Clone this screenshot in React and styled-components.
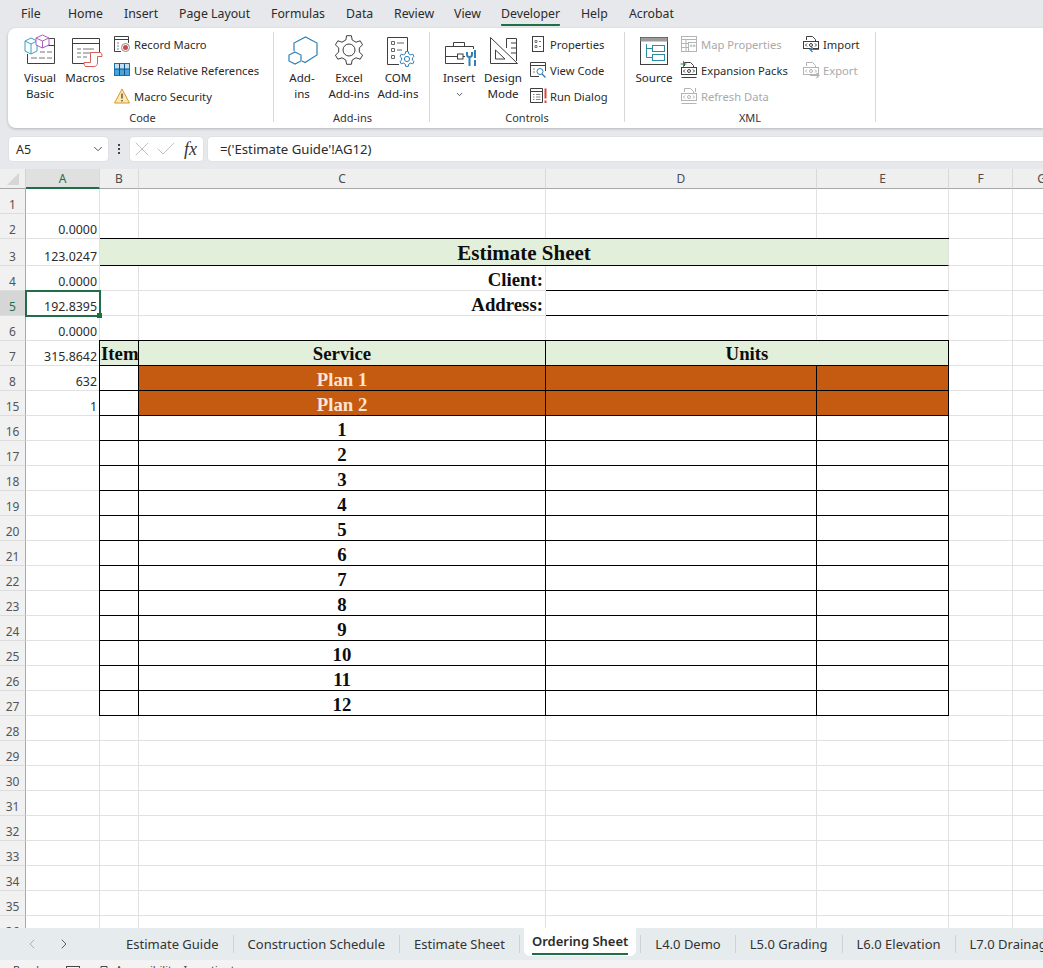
import React from 'react';
import styled, { createGlobalStyle, css } from 'styled-components';
import { Check, ChevronDown, ChevronLeft, ChevronRight, X } from 'lucide-react';

const UI_FONT = '"Noto Sans", "Open Sans", sans-serif';
const GRID_LINE = '#e1e1e1';
const GREEN = '#1f6e46';
const BLUE = '#2f80b5';
const GREY_ICON = '#b4b4b4';
const DARK_ICON = '#3f3f3f';

const GlobalStyle = createGlobalStyle`
  html, body { margin: 0; padding: 0; background: #e6e8ec; }
  body { font-family: ${UI_FONT}; color: #262626; }
`;

const Page = styled.div`
  width: 1043px;
  height: 968px;
  display: flex;
  flex-direction: column;
  overflow: hidden;
  background: #e6e8ec;
`;

/* menu */
const MenuBar = styled.nav`
  height: 28px;
  flex: none;
  display: flex;
  padding-left: 21px;
`;
const MenuItem = styled.div`
  width: ${(p) => p.$w}px;
  flex: none;
  font-size: 12.3px;
  line-height: 28px;
  color: #2b2b2b;
`;
const MenuActive = styled.span`
  display: inline-block;
  height: 24px;
  line-height: 28px;
  border-bottom: 2px solid ${GREEN};
  border-radius: 0 0 1px 1px;
`;

/* ribbon */
const Ribbon = styled.section`
  height: 100px;
  flex: none;
  box-sizing: border-box;
  margin-left: 8px;
  padding-top: 4px;
  display: flex;
  background: #fff;
  border-radius: 8px 0 0 8px;
  box-shadow: 0 1px 3px rgba(0, 0, 0, 0.22);
`;
const Group = styled.div`
  width: ${(p) => p.$w}px;
  flex: none;
  box-sizing: border-box;
  padding-left: ${(p) => p.$pad}px;
  display: flex;
  flex-direction: column;
`;
const GroupBody = styled.div`
  height: 78px;
  display: flex;
`;
const GroupName = styled.div`
  margin-top: 2px;
  font-size: 11px;
  line-height: 12px;
  text-align: center;
  color: #333;
  margin-left: ${(p) => -p.$pad}px;
`;
const RibbonSep = styled.div`
  width: 1px;
  height: 90px;
  flex: none;
  background: #d8d8d8;
`;
const BigButton = styled.div`
  width: ${(p) => p.$w}px;
  flex: none;
  padding-top: 2px;
  display: flex;
  flex-direction: column;
  align-items: center;
  font-size: 11.6px;
  line-height: 16px;
  text-align: center;
  white-space: nowrap;
`;
const BigIcon = styled.svg`
  width: 32px;
  height: 32px;
  margin-bottom: 4px;
  overflow: visible;
  fill: none;
  flex: none;
`;
const InsertChevron = styled(ChevronDown)`
  margin-top: 4px;
`;
const SmallColumn = styled.div`
  width: ${(p) => (p.$w ? `${p.$w}px` : 'auto')};
  flex: none;
  margin-top: -1px;
  margin-left: ${(p) => p.$gap || 0}px;
  display: flex;
  flex-direction: column;
`;
const SmallButton = styled.div`
  height: 26px;
  display: flex;
  align-items: center;
  gap: 4px;
  font-size: 11.2px;
  white-space: nowrap;
  color: ${(p) => (p.$off ? '#a9a9a9' : '#2b2b2b')};
`;
const SmallIcon = styled.svg`
  width: 16px;
  height: 16px;
  flex: none;
  overflow: visible;
  fill: none;
`;

/* formula bar */
const FormulaBar = styled.div`
  height: 24px;
  flex: none;
  padding: 9px 0 8px 9px;
  display: flex;
  align-items: stretch;
`;
const InputBox = styled.div`
  flex: ${(p) => (p.$grow ? '1' : 'none')};
  width: ${(p) => (p.$w ? `${p.$w}px` : 'auto')};
  margin-left: ${(p) => p.$gap || 0}px;
  box-sizing: border-box;
  display: flex;
  align-items: center;
  background: #fff;
  border-radius: ${(p) => (p.$grow ? '4px 0 0 4px' : '4px')};
  box-shadow: 0 0 0 1px #dfe1e5;
  font-size: 13.2px;
  color: #2b2b2b;
`;
const NameBox = styled(InputBox)`
  justify-content: space-between;
  padding: 0 3px 0 7px;
  font-size: 12.5px;
`;
const Dots = styled.div`
  width: 22px;
  flex: none;
  display: flex;
  flex-direction: column;
  align-items: center;
  justify-content: center;
  gap: 2px;
  & > i {
    width: 2px;
    height: 2px;
    background: #444;
  }
`;
const FxBox = styled(InputBox)`
  color: #c0c0c0;
`;
const FxText = styled.span`
  font-family: "Liberation Serif", serif;
  font-style: italic;
  font-size: 18px;
  color: #333;
  margin-left: 6px;
`;
const FormulaText = styled.span`
  padding-left: 12px;
`;

/* sheet */
const Sheet = styled.div`
  flex: 1;
  min-height: 0;
  overflow: hidden;
  display: grid;
  grid-template-columns: 26px 74px 39px 407px 271px 132px 64px 58px;
  grid-template-rows: 20px 25px 25px 27px repeat(40, 25px);
  background: #fff;
`;
const Corner = styled.div`
  background: #efefef;
  border-bottom: 1px solid #a8a8a8;
  border-right: 1px solid #d4d4d4;
  display: flex;
  align-items: center;
  justify-content: center;
`;
const ColHead = styled.div`
  display: flex;
  align-items: center;
  justify-content: center;
  font-size: 12px;
  color: ${(p) => (p.$active ? GREEN : '#4d4d4d')};
  background: ${(p) => (p.$active ? '#e0e0e0' : '#efefef')};
  border-right: 1px solid #d9d9d9;
  border-bottom: ${(p) => (p.$active ? `2px solid ${GREEN}` : '1px solid #a8a8a8')};
`;
const RowHead = styled.div`
  display: flex;
  align-items: flex-end;
  justify-content: center;
  font-size: 12px;
  line-height: 16px;
  color: ${(p) => (p.$active ? GREEN : '#555')};
  background: ${(p) => (p.$active ? '#d6d6d6' : '#f1f1f1')};
  border-right: 1px solid #a8a8a8;
  border-bottom: 1px solid #dcdcdc;
`;

const frames = {
  box: css`
    position: relative;
    z-index: 1;
    border-right-color: #000;
    border-bottom-color: #000;
    box-shadow: -1px 0 0 #000, 0 -1px 0 #000, -1px -1px 0 #000;
  `,
  rule: css`
    position: relative;
    z-index: 1;
    border-bottom-color: #000;
    box-shadow: 0 -1px 0 #000;
  `,
  under: css`
    border-bottom-color: #000;
  `,
};

const Cell = styled.div`
  grid-column: span ${(p) => p.$span || 1};
  min-width: 0;
  display: flex;
  align-items: flex-end;
  justify-content: ${(p) => p.$align || 'center'};
  background: ${(p) => p.$bg || '#fff'};
  border-right: 1px solid ${GRID_LINE};
  border-bottom: 1px solid ${GRID_LINE};
  ${(p) => p.$frame && frames[p.$frame]}
`;
const ValueCell = styled(Cell)`
  justify-content: flex-end;
  padding-right: 2px;
  font-size: 12.4px;
  line-height: 16px;
  color: #2b2b2b;
  ${(p) =>
    p.$selected &&
    css`
      position: relative;
      z-index: 2;
      outline: 2px solid ${GREEN};
      outline-offset: -1px;
      &::after {
        content: '';
        position: absolute;
        right: -3px;
        bottom: -3px;
        width: 5px;
        height: 5px;
        background: ${GREEN};
      }
    `}
`;
const SerifCell = styled(Cell)`
  font-family: "Liberation Serif", "Times New Roman", serif;
  font-weight: 700;
  font-size: ${(p) => p.$size || 18.8}px;
  line-height: ${(p) => (p.$size ? 24 : 21)}px;
  color: ${(p) => p.$color || '#0d0d0d'};
  white-space: nowrap;
`;
const FieldLabel = styled(SerifCell)`
  padding-right: 2px;
`;
const HeadCell = styled(SerifCell)`
  line-height: 23px;
  padding-left: ${(p) => p.$inset || 0}px;
`;

/* sheet tabs */
const TabBar = styled.div`
  height: 32px;
  flex: none;
  display: flex;
  background: #e6ebee;
  white-space: nowrap;
  overflow: hidden;
`;
const TabNav = styled.div`
  width: 112px;
  flex: none;
  box-sizing: border-box;
  padding-left: 24px;
  display: flex;
  align-items: center;
  gap: 16px;
`;
const Tab = styled.div`
  flex: none;
  padding: 0 14px;
  font-size: 13px;
  line-height: 32px;
  color: #333;
`;
const TabSep = styled.div`
  width: 1px;
  height: 18px;
  flex: none;
  margin-top: 7px;
  background: #cfd3d6;
`;
const ActiveTab = styled.div`
  flex: none;
  height: 28px;
  box-sizing: border-box;
  margin: 0 4px;
  padding: 0 8px;
  background: #fff;
  border-radius: 0 0 6px 6px;
  font-size: 13px;
  font-weight: 600;
  line-height: 26px;
  color: #2b2b2b;
  & > span {
    display: block;
    height: 25px;
    border-bottom: 2px solid ${GREEN};
  }
`;

/* status bar, only the top of it is in the frame */
const StatusBar = styled.footer`
  height: 8px;
  flex: none;
  box-sizing: border-box;
  overflow: hidden;
  display: flex;
  align-items: flex-start;
  padding: 2px 0 0 13px;
  background: #f3f3f3;
  font-size: 11px;
  line-height: 16px;
  color: #444;
`;
const StatusIcon = styled.svg`
  width: 16px;
  height: 16px;
  flex: none;
  fill: none;
  margin: 3px 4px 0 ${(p) => p.$gap}px;
`;

/* gear outline used by the add-in icons */
function gearPath(cx, cy, ro, ri, teeth) {
  const step = (Math.PI * 2) / teeth;
  let d = '';
  for (let i = 0; i < teeth; i++) {
    const a = i * step - Math.PI / 2;
    const pts = [
      [ri, a - step * 0.3],
      [ro, a - step * 0.16],
      [ro, a + step * 0.16],
      [ri, a + step * 0.3],
    ];
    pts.forEach(([r, t], j) => {
      const x = (cx + r * Math.cos(t)).toFixed(1);
      const y = (cy + r * Math.sin(t)).toFixed(1);
      d += `${i === 0 && j === 0 ? 'M' : 'L'}${x} ${y}`;
    });
  }
  return `${d}Z`;
}

const VisualBasicIcon = () => (
  <BigIcon viewBox="0 0 32 32">
    <path d="M24 4.5H30.5V29.5H3.5V20M14 11.5H30.5" stroke={DARK_ICON} />
    <path d="M16 18h5M23 18h5M7 24h6M15 24h6M23 24h5" stroke="#777" />
    <path d="M7 4L13 7V17L7 20L1 17V7ZM1 7L7 10L13 7M7 10V20" stroke="#3b9fc6" fill="#fff" />
    <path d="M18.5 1L25 4V11L18.5 14L12 11V4ZM12 4L18.5 7L25 4M18.5 7V14" stroke="#a760bf" fill="#fff" />
  </BigIcon>
);
const MacrosIcon = () => (
  <BigIcon viewBox="0 0 32 32">
    <path d="M3.5 4.5H30.5V19M3.5 4.5V29.5H16M3.5 9.5H30.5" stroke={DARK_ICON} />
    <path d="M8 15h4M14 15h11M8 19h4M14 19h8M8 23h4M14 23h4" stroke="#777" />
    <path d="M21.5 18.5H31C32.5 18.5 33 20 33 22.5H28.5V29C28.5 31 27 32.5 25 32.5H17C15.5 32.5 15 31 15 28.5H21.5Z" stroke="#d9605a" fill="#fff" />
  </BigIcon>
);
const RecordIcon = () => (
  <SmallIcon viewBox="0 0 16 16">
    <path d="M.5 .5H14.5V7M.5 .5V15.5H7M.5 3.5H14.5" stroke={DARK_ICON} />
    <path d="M3 7h2M3 10h2M3 13h2" stroke="#888" />
    <circle cx="11.5" cy="11.5" r="4" stroke="#8a8a8a" fill="#fff" />
    <circle cx="11.5" cy="11.5" r="2.5" fill="#d9453d" />
  </SmallIcon>
);
const RelativeIcon = () => (
  <SmallIcon viewBox="0 0 16 16">
    <rect x=".5" y="1.5" width="15" height="12" fill="#bfe0f5" stroke="#1d6fa8" />
    <rect x="1" y="7" width="14" height="6" fill="#48a4de" />
    <path d="M.5 7H15.5M5.5 1.5V13.5M10.5 1.5V13.5" stroke="#17507c" />
  </SmallIcon>
);
const WarningIcon = () => (
  <SmallIcon viewBox="0 0 16 16">
    <path d="M8 1L15.5 15H.5Z" fill="#fde7ae" stroke="#d8982c" strokeLinejoin="round" />
    <path d="M8 5.5V10.5M8 12V13.5" stroke="#444" strokeWidth="1.3" />
  </SmallIcon>
);
const AddInsIcon = () => (
  <BigIcon viewBox="0 0 32 32">
    <path d="M8 17V9L19.5 3L31 9V21L19 28.5L16 27" stroke={BLUE} strokeWidth="1.2" />
    <path d="M9 18L15 21V27L9 30L3 27V21Z" stroke={BLUE} strokeWidth="1.2" />
  </BigIcon>
);
const ExcelAddInsIcon = () => (
  <BigIcon viewBox="0 0 32 32">
    <path d={gearPath(16, 16, 14.5, 10.5, 6)} stroke={DARK_ICON} strokeLinejoin="round" />
    <circle cx="16" cy="16" r="6" stroke={DARK_ICON} />
  </BigIcon>
);
const ComAddInsIcon = () => (
  <BigIcon viewBox="0 0 32 32">
    <path d="M5.5 3.5H25.5V17M5.5 3.5V30.5H17" stroke={DARK_ICON} />
    <path d="M9.5 7.5h3v3h-3zM9.5 14.5h3v3h-3zM9.5 21.5h3v3h-3z" stroke="#666" />
    <path d="M15 9h7M15 16h5" stroke="#666" />
    <path d={gearPath(25, 25, 7.5, 5.5, 6)} stroke={BLUE} fill="#fff" strokeLinejoin="round" />
    <circle cx="25" cy="25" r="2.6" stroke={BLUE} />
  </BigIcon>
);
const InsertIcon = () => (
  <BigIcon viewBox="0 0 32 32">
    <path d="M10.5 12V8.5H21.5V12" stroke={DARK_ICON} />
    <path d="M2.5 12.5H30.5V15M2.5 12.5V29.5H21M2.5 22.5H14M20 22.5H22" stroke={DARK_ICON} />
    <rect x="14.5" y="20" width="5.5" height="5" stroke={DARK_ICON} fill="#fff" />
    <path d="M24 18V20.5A2.5 2.5 0 0 0 29 20.5V18M26.5 23V32" stroke={BLUE} strokeWidth="2" />
    <path d="M32 16V24M32 26V32" stroke={BLUE} strokeWidth="2" />
  </BigIcon>
);
const DesignModeIcon = () => (
  <BigIcon viewBox="0 0 32 32">
    <path d="M3.5 3.5V29.5H30.5ZM8.5 16V25H18Z" stroke={DARK_ICON} />
    <path d="M19.5 14V4.5H29.5V27M24 9h5M24 14h5M24 19h5" stroke={DARK_ICON} />
  </BigIcon>
);
const PropertiesIcon = () => (
  <SmallIcon viewBox="0 0 16 16">
    <rect x="2.5" y=".5" width="11" height="15" stroke={DARK_ICON} />
    <path d="M5 4.5h2v2H5zM5 9.5h2v2H5zM9 5.5h2M9 10.5h2" stroke="#777" />
  </SmallIcon>
);
const ViewCodeIcon = () => (
  <SmallIcon viewBox="0 0 16 16">
    <path d="M.5 .5H15.5V9M.5 .5V14.5H9M.5 3.5H15.5" stroke={DARK_ICON} />
    <path d="M3 7h2M3 10h2" stroke="#888" />
    <circle cx="10" cy="9.5" r="3" stroke={BLUE} fill="#fff" />
    <path d="M12 12L15.5 15.5" stroke={BLUE} strokeWidth="1.4" />
  </SmallIcon>
);
const RunDialogIcon = () => (
  <SmallIcon viewBox="0 0 16 16">
    <path d="M.5 .5H12.5V14.5H.5ZM.5 3.5H12.5" stroke={DARK_ICON} />
    <path d="M3 6.5h1.5M6 6.5h4.5M3 9h1.5M6 9h4.5M3 11.5h1.5M6 11.5h4.5" stroke="#888" />
    <path d="M15.5 .5V10.5M15.5 12.5V15" stroke="#d9453d" strokeWidth="2" />
  </SmallIcon>
);
const SourceIcon = () => (
  <BigIcon viewBox="0 0 32 32">
    <rect x="2.5" y="3.5" width="27" height="27" stroke={DARK_ICON} fill="#fff" />
    <rect x="2.5" y="3.5" width="27" height="4" fill="#9c9c9c" />
    <rect x="14.5" y="11.5" width="12" height="6" stroke="#2d8ba6" />
    <rect x="14.5" y="20.5" width="12" height="6" stroke="#2d8ba6" />
    <path d="M8.5 10V23.5H14.5M8.5 14.5H14.5" stroke="#2d8ba6" />
  </BigIcon>
);
const MapPropertiesIcon = () => (
  <SmallIcon viewBox="0 0 16 16">
    <rect x=".5" y=".5" width="15" height="15" stroke={GREY_ICON} />
    <path d="M.5 3.5H15.5M.5 7.5H8M.5 11.5H8M5 3.5V15.5" stroke={GREY_ICON} />
    <rect x="7.5" y="6.5" width="8" height="9" stroke={GREY_ICON} fill="#fff" />
    <path d="M9.5 9h1.5v1.5H9.5zM12.5 9H14v1.5h-1.5z" stroke={GREY_ICON} strokeWidth=".8" />
  </SmallIcon>
);

/* folded page with a tag plate, shared by the xml icons */
const XmlPlate = ({ color }) => (
  <>
    <path d="M3.5 4V.5H9.5L12.5 3.5V5" stroke={color} />
    <rect x=".5" y="5.5" width="15" height="7" stroke={color} fill="#fff" />
    <path d="M4 7.5L2.5 9L4 10.5M12 7.5L13.5 9L12 10.5" stroke={color} />
    <circle cx="8" cy="9" r="1.5" stroke={color} />
  </>
);
const ExpansionIcon = () => (
  <SmallIcon viewBox="0 0 16 16">
    <XmlPlate color={DARK_ICON} />
    <path d="M.5 15.5H15.5" stroke={DARK_ICON} />
    <path d="M2.5 -1V5M-.5 2H5.5" stroke="#3b9150" />
  </SmallIcon>
);
const RefreshIcon = () => (
  <SmallIcon viewBox="0 0 16 16">
    <XmlPlate color={GREY_ICON} />
    <path d="M.5 15.5H15.5M14.5 0V4" stroke={GREY_ICON} />
  </SmallIcon>
);
const ImportIcon = () => (
  <SmallIcon viewBox="0 0 16 16">
    <XmlPlate color={DARK_ICON} />
    <path d="M16 13.5H7M9.5 11L7 13.5L9.5 16" stroke={BLUE} strokeWidth="1.2" fill="#fff" />
  </SmallIcon>
);
const ExportIcon = () => (
  <SmallIcon viewBox="0 0 16 16">
    <XmlPlate color={GREY_ICON} />
    <path d="M7 13.5H16M13.5 11L16 13.5L13.5 16" stroke={GREY_ICON} strokeWidth="1.2" />
  </SmallIcon>
);

const TABS_BEFORE = ['Estimate Guide', 'Construction Schedule', 'Estimate Sheet'];
const TABS_AFTER = ['L4.0 Demo', 'L5.0 Grading', 'L6.0 Elevation', 'L7.0 Drainage'];
const COLUMNS = ['A', 'B', 'C', 'D', 'E', 'F', 'G'];
const MENU = [
  ['File', 47], ['Home', 56], ['Insert', 55], ['Page Layout', 92], ['Formulas', 75],
  ['Data', 48], ['Review', 60], ['View', 47], ['Developer', 80], ['Help', 48], ['Acrobat', 60],
];
const ORANGE = '#c55a11';
const PALE_GREEN = '#e2efda';
const PEACH = '#fbe5d6';

const rows = [
  { label: '1', kind: 'plain' },
  { label: '2', value: '0.0000', kind: 'plain' },
  { label: '3', value: '123.0247', kind: 'title' },
  { label: '4', value: '0.0000', kind: 'field', text: 'Client:' },
  { label: '5', value: '192.8395', kind: 'field', text: 'Address:', selected: true },
  { label: '6', value: '0.0000', kind: 'plain' },
  { label: '7', value: '315.8642', kind: 'header' },
  { label: '8', value: '632', kind: 'plan', text: 'Plan 1' },
  { label: '15', value: '1', kind: 'plan', text: 'Plan 2' },
  ...Array.from({ length: 12 }, (_, i) => ({ label: String(16 + i), kind: 'item', text: String(i + 1) })),
  ...Array.from({ length: 9 }, (_, i) => ({ label: String(28 + i), kind: 'plain' })),
];

function RowCells({ row }) {
  switch (row.kind) {
    case 'title':
      return (
        <>
          <SerifCell $span={4} $frame="rule" $bg={PALE_GREEN} $size={21}>Estimate Sheet</SerifCell>
          <Cell />
          <Cell />
        </>
      );
    case 'field':
      return (
        <>
          <Cell />
          <FieldLabel $align="flex-end">{row.text}</FieldLabel>
          <Cell $frame="under" />
          <Cell $frame="under" />
          <Cell />
          <Cell />
        </>
      );
    case 'header':
      return (
        <>
          <HeadCell $frame="box" $bg={PALE_GREEN} $align="flex-start" $inset={1}>Item</HeadCell>
          <HeadCell $frame="box" $bg={PALE_GREEN}>Service</HeadCell>
          <HeadCell $frame="box" $bg={PALE_GREEN} $span={2}>Units</HeadCell>
          <Cell />
          <Cell />
        </>
      );
    case 'plan':
      return (
        <>
          <Cell $frame="box" />
          <SerifCell $frame="box" $bg={ORANGE} $color={PEACH}>{row.text}</SerifCell>
          <Cell $frame="box" $bg={ORANGE} />
          <Cell $frame="box" $bg={ORANGE} />
          <Cell />
          <Cell />
        </>
      );
    case 'item':
      return (
        <>
          <Cell $frame="box" />
          <SerifCell $frame="box">{row.text}</SerifCell>
          <Cell $frame="box" />
          <Cell $frame="box" />
          <Cell />
          <Cell />
        </>
      );
    default:
      return (
        <>
          <Cell />
          <Cell />
          <Cell />
          <Cell />
          <Cell />
          <Cell />
        </>
      );
  }
}

export default function App() {
  return (
    <Page>
      <GlobalStyle />
      <MenuBar>
        {MENU.map(([name, w]) => (
          <MenuItem key={name} $w={w}>
            {name === 'Developer' ? <MenuActive>{name}</MenuActive> : name}
          </MenuItem>
        ))}
      </MenuBar>

      <Ribbon>
        <Group $w={265} $pad={7}>
          <GroupBody>
            <BigButton $w={50}><VisualBasicIcon />Visual<br />Basic</BigButton>
            <BigButton $w={40}><MacrosIcon />Macros</BigButton>
            <SmallColumn $gap={9}>
              <SmallButton><RecordIcon />Record Macro</SmallButton>
              <SmallButton><RelativeIcon />Use Relative References</SmallButton>
              <SmallButton><WarningIcon />Macro Security</SmallButton>
            </SmallColumn>
          </GroupBody>
          <GroupName $pad={3}>Code</GroupName>
        </Group>
        <RibbonSep />
        <Group $w={155} $pad={5}>
          <GroupBody>
            <BigButton $w={46}><AddInsIcon />Add-<br />ins</BigButton>
            <BigButton $w={48}><ExcelAddInsIcon />Excel<br />Add-ins</BigButton>
            <BigButton $w={50}><ComAddInsIcon />COM<br />Add-ins</BigButton>
          </GroupBody>
          <GroupName $pad={3}>Add-ins</GroupName>
        </Group>
        <RibbonSep />
        <Group $w={194} $pad={7}>
          <GroupBody>
            <BigButton $w={44}><InsertIcon />Insert<InsertChevron size={9} strokeWidth={2} /></BigButton>
            <BigButton $w={44}><DesignModeIcon />Design<br />Mode</BigButton>
            <SmallColumn $gap={5}>
              <SmallButton><PropertiesIcon />Properties</SmallButton>
              <SmallButton><ViewCodeIcon />View Code</SmallButton>
              <SmallButton><RunDialogIcon />Run Dialog</SmallButton>
            </SmallColumn>
          </GroupBody>
          <GroupName $pad={7}>Controls</GroupName>
        </Group>
        <RibbonSep />
        <Group $w={250} $pad={7}>
          <GroupBody>
            <BigButton $w={44}><SourceIcon />Source</BigButton>
            <SmallColumn $w={122} $gap={5}>
              <SmallButton $off><MapPropertiesIcon />Map Properties</SmallButton>
              <SmallButton><ExpansionIcon />Expansion Packs</SmallButton>
              <SmallButton $off><RefreshIcon />Refresh Data</SmallButton>
            </SmallColumn>
            <SmallColumn>
              <SmallButton><ImportIcon />Import</SmallButton>
              <SmallButton $off><ExportIcon />Export</SmallButton>
            </SmallColumn>
          </GroupBody>
          <GroupName $pad={7}>XML</GroupName>
        </Group>
        <RibbonSep />
      </Ribbon>

      <FormulaBar>
        <NameBox $w={99}>A5<ChevronDown size={14} strokeWidth={1.5} color="#444" /></NameBox>
        <Dots><i /><i /><i /></Dots>
        <FxBox $w={73}>
          <X size={24} strokeWidth={1} />
          <Check size={24} strokeWidth={1} />
          <FxText>fx</FxText>
        </FxBox>
        <InputBox $grow $gap={5}>
          <FormulaText>=('Estimate Guide'!AG12)</FormulaText>
        </InputBox>
      </FormulaBar>

      <Sheet>
        <Corner>
          <svg width="14" height="14" viewBox="0 0 14 14"><path d="M13 1V13H1Z" fill="#d6d6d6" /></svg>
        </Corner>
        {COLUMNS.map((c) => (
          <ColHead key={c} $active={c === 'A'}>{c}</ColHead>
        ))}
        {rows.map((row) => (
          <React.Fragment key={row.label}>
            <RowHead $active={row.selected}>{row.label}</RowHead>
            <ValueCell $selected={row.selected}>{row.value}</ValueCell>
            <RowCells row={row} />
          </React.Fragment>
        ))}
      </Sheet>

      <TabBar>
        <TabNav>
          <ChevronLeft size={16} strokeWidth={1.3} color="#a5a5a5" />
          <ChevronRight size={16} strokeWidth={1.3} color="#444" />
        </TabNav>
        {TABS_BEFORE.map((t, i) => (
          <React.Fragment key={t}>
            <Tab>{t}</Tab>
            {i < TABS_BEFORE.length - 1 && <TabSep />}
          </React.Fragment>
        ))}
        <TabSep />
        <ActiveTab><span>Ordering Sheet</span></ActiveTab>
        <TabSep />
        {TABS_AFTER.map((t, i) => (
          <React.Fragment key={t}>
            <Tab>{t}</Tab>
            {i < TABS_AFTER.length - 1 && <TabSep />}
          </React.Fragment>
        ))}
      </TabBar>

      <StatusBar>
        Ready
        <StatusIcon $gap={20} viewBox="0 0 16 16">
          <rect x="1.5" y="1.5" width="13" height="12" stroke="#444" />
          <path d="M1.5 4.5H14.5" stroke="#444" />
        </StatusIcon>
        <StatusIcon $gap={11} viewBox="0 0 16 16">
          <path d="M5 3V1.5H11V3M2.5 3.5H13.5V14H2.5Z" stroke="#444" />
        </StatusIcon>
        Accessibility: Investigate
      </StatusBar>
    </Page>
  );
}
